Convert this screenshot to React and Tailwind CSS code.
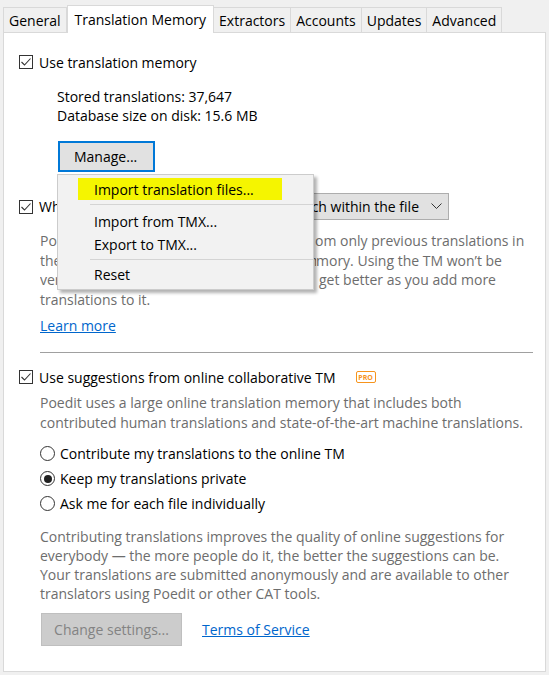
import React from "react";

const F = { fontFamily: '"Open Sans", "Noto Sans", sans-serif' };

function Check({ checked = true }) {
  return (
    <span className="w-[14px] h-[14px] border border-[#333333] bg-white flex items-center justify-center shrink-0">
      {checked && (
        <svg width="12" height="12" viewBox="0 0 12 12">
          <polyline points="1.5,6 4.5,9 10.5,2.5" fill="none" stroke="#333333" strokeWidth="1.1" />
        </svg>
      )}
    </span>
  );
}

function Radio({ on }) {
  return (
    <span className="w-[15px] h-[15px] rounded-full border border-[#333333] bg-white flex items-center justify-center shrink-0">
      {on && <span className="w-[8px] h-[8px] rounded-full bg-[#222222]" />}
    </span>
  );
}

function Tab({ children, active }) {
  if (active)
    return (
      <div className="h-[28px] px-[7px] bg-white border-t border-l border-r border-[#d9d9d9] flex items-center relative z-10 mb-[-1px] text-[#000]">
        {children}
      </div>
    );
  return (
    <div className="h-[25px] px-[5px] bg-[#f0f0f0] border-t border-l border-r border-[#d9d9d9] flex items-center text-[#000] ml-[-1px] first:ml-0">
      {children}
    </div>
  );
}

export default function App() {
  return (
    <div className="w-[549px] h-[675px] bg-[#f0f0f0] relative overflow-hidden text-[14px] text-black" style={F}>
      <div className="flex items-end pl-[3px] pt-[5px]">
        <Tab>General</Tab>
        <Tab active>Translation Memory</Tab>
        <Tab>Extractors</Tab>
        <Tab>Accounts</Tab>
        <Tab>Updates</Tab>
        <Tab>Advanced</Tab>
      </div>
      <div className="mx-[3px] h-[640px] bg-white border border-[#d9d9d9] pl-[15px] pt-[19px]">
        <div className="flex items-center h-[20px] gap-[6px]">
          <Check />
          <span>Use translation memory</span>
        </div>
        <div className="ml-[38px] mt-[15px] leading-[19px]">
          <div>Stored translations: 37,647</div>
          <div>Database size on disk: 15.6 MB</div>
        </div>
        <div className="ml-[39px] mt-[16px] w-[97px] h-[31px] border-2 border-[#0078d7] bg-[#e1e1e1] flex items-center pl-[14px]">
          Manage...
        </div>
        <div className="mt-[21px] h-[27px] w-[430px] flex items-center whitespace-nowrap">
          <Check />
          <span className="ml-[6px]">When opening files, use</span>
          <div className="ml-auto w-[200px] h-[27px] bg-[#e1e1e1] border border-[#adadad] flex items-center justify-end overflow-hidden pr-[6px]">
            <span>Fuzzy match within the file</span>
            <svg className="ml-[12px] shrink-0" width="11" height="7" viewBox="0 0 11 7">
              <polyline points="0.5,0.5 5.5,5.5 10.5,0.5" fill="none" stroke="#333" strokeWidth="1" />
            </svg>
          </div>
        </div>
        <div className="ml-[21px] mt-[11px] leading-[19.5px] text-[#6d6d6d] whitespace-nowrap">
          <div><span className="inline-block w-[275px] overflow-hidden align-bottom">Poedit builds its translation memory fr</span>om only previous translations in</div>
          <div><span className="inline-block w-[276px] overflow-hidden align-bottom">the files you translate, not from a shared me</span>mory. Using the TM won’t be</div>
          <div><span className="inline-block w-[279px] overflow-hidden align-bottom">very useful at first, but its suggestions will</span>get better as you add more</div>
          <div>translations to it.</div>
        </div>
        <div className="ml-[21px] mt-[7px] leading-[20px]">
          <span className="text-[#0066cc] underline">Learn more</span>
        </div>
        <div className="ml-[21px] mt-[16px] w-[493px] h-px bg-[#a0a0a0]" />
        <div className="flex items-center h-[20px] gap-[6px] mt-[14px]">
          <Check />
          <span>Use suggestions from online collaborative TM</span>
          <span className="ml-[14px] w-[20px] h-[12px] border-[1.5px] border-[#f7941d] rounded-[2px] text-[7px] font-bold text-[#f7941d] flex items-center justify-center leading-none">PRO</span>
        </div>
        <div className="ml-[21px] mt-[6px] leading-[20px] text-[#6d6d6d]">
          <div>Poedit uses a large online translation memory that includes both</div>
          <div>contributed human translations and state-of-the-art machine translations.</div>
        </div>
        <div className="ml-[21px] mt-[8px] flex flex-col">
          <div className="flex items-center h-[25px] gap-[5px]"><Radio /><span>Contribute my translations to the online TM</span></div>
          <div className="flex items-center h-[25px] gap-[5px]"><Radio on /><span>Keep my translations private</span></div>
          <div className="flex items-center h-[25px] gap-[5px]"><Radio /><span>Ask me for each file individually</span></div>
        </div>
        <div className="ml-[21px] mt-[11px] leading-[19px] text-[#6d6d6d]">
          <div>Contributing translations improves the quality of online suggestions for</div>
          <div>everybody — the more people do it, the better the suggestions can be.</div>
          <div>Your translations are submitted anonymously and are available to other</div>
          <div>translators using Poedit or other CAT tools.</div>
        </div>
        <div className="ml-[22px] mt-[10px] flex items-center gap-[20px]">
          <div className="w-[141px] h-[33px] bg-[#cccccc] border border-[#bfbfbf] text-[#838383] flex items-center justify-center">Change settings...</div>
          <span className="text-[#0066cc] underline">Terms of Service</span>
        </div>
      </div>

      <div className="absolute left-[57px] top-[174px] w-[257px] h-[116px] bg-[#f2f2f2] border border-[#cccccc] shadow-[3px_3px_3px_rgba(0,0,0,0.3)] z-20">
        <div className="ml-[20px] mt-[3px] w-[204px] h-[22px] bg-[#f5f500] flex items-center pl-[16px]">Import translation files...</div>
        <div className="ml-[32px] mt-[4px] h-px bg-[#d4d4d4]" />
        <div className="pl-[36px] mt-[5px] leading-[23px]">
          <div>Import from TMX...</div>
          <div>Export to TMX...</div>
        </div>
        <div className="ml-[32px] mt-[3px] h-px bg-[#d4d4d4]" />
        <div className="pl-[36px] mt-[4px] leading-[22px]">Reset</div>
      </div>
    </div>
  );
}
